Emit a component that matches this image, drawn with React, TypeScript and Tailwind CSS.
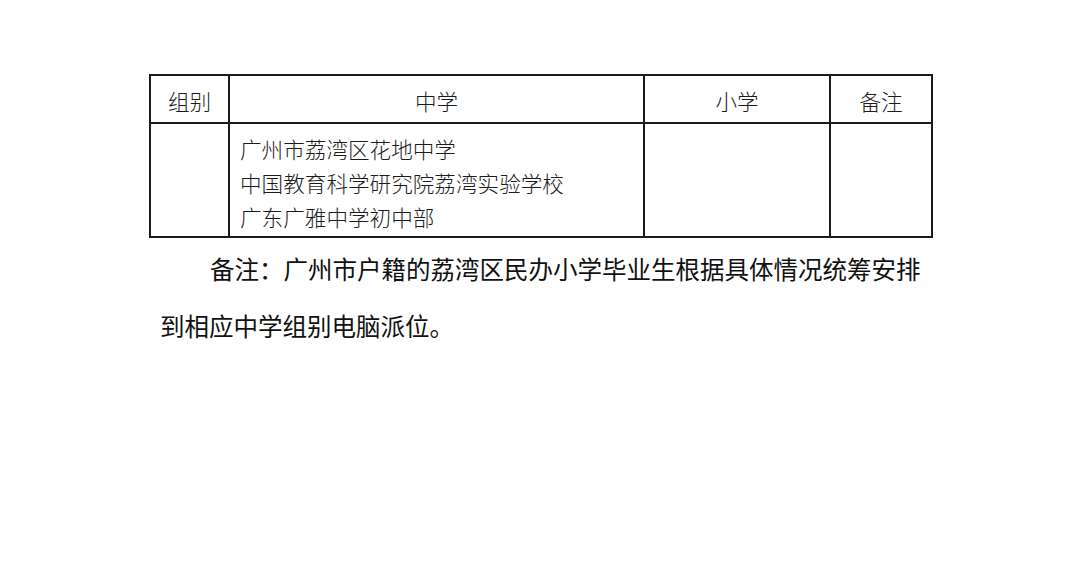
import React from "react";

export default function App() {
  const cell = "border-2 border-[#1a1a1a]";
  const head = `${cell} text-center align-middle leading-none pt-[4px]`;
  return (
    <div
      className="w-[1080px] h-[572px] bg-white text-[#1c1c1c] overflow-hidden"
      style={{ fontFamily: '"Noto Sans CJK SC", "Noto Sans", sans-serif' }}
    >
      <div className="pt-[74px] pl-[149px]">
        <table className="border-collapse table-fixed w-[782px] text-[21.6px] font-light">
          <colgroup>
            <col className="w-[79px]" />
            <col className="w-[415px]" />
            <col className="w-[186px]" />
            <col className="w-[102px]" />
          </colgroup>
          <tbody>
            <tr className="h-[48px]">
              <td className={head}>组别</td>
              <td className={head}>中学</td>
              <td className={head}>小学</td>
              <td className={head}>备注</td>
            </tr>
            <tr className="h-[114px]">
              <td className={cell}></td>
              <td className={`${cell} align-top pl-[10px] pt-[8px]`}>
                <div className="leading-[34px]">广州市荔湾区花地中学</div>
                <div className="leading-[34px]">中国教育科学研究院荔湾实验学校</div>
                <div className="leading-[34px]">广东广雅中学初中部</div>
              </td>
              <td className={cell}></td>
              <td className={cell}></td>
            </tr>
          </tbody>
        </table>
      </div>
      <div className="pl-[160px] pt-[2px] w-[960px] text-[24.5px] leading-[57px] text-[#111]">
        <p className="indent-[50px]">
          备注：广州市户籍的荔湾区民办小学毕业生根据具体情况统筹安排
        </p>
        <p>到相应中学组别电脑派位。</p>
      </div>
    </div>
  );
}
